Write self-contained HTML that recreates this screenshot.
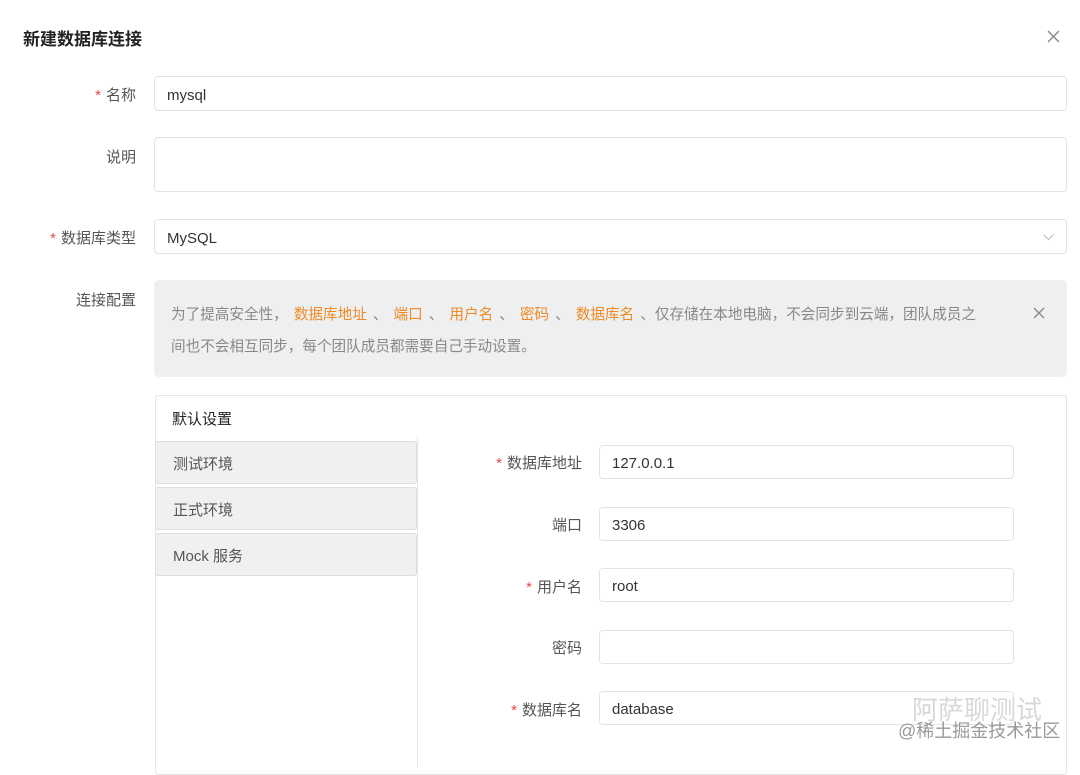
<!DOCTYPE html><html><head><meta charset="utf-8"><style>
*{box-sizing:border-box;margin:0;padding:0}
body{width:1080px;height:757px;background:#fff;font-family:"Liberation Sans","Noto Sans CJK SC",sans-serif;color:#333;position:relative;overflow:hidden;font-size:15px}
.a{position:absolute}
.lbl{position:absolute;text-align:right;font-size:15px;color:#555}
.req{color:#e5484d;margin-right:5px}
.inp{position:absolute;border:1px solid #e3e3e3;border-radius:4px;background:#fff;font-size:15px;color:#333;padding-left:12px;padding-top:3px;display:flex;align-items:center}
.tab{position:absolute;left:155px;width:262px;height:43px;background:#eff0f2;border:1px solid #dedede;border-radius:3px;font-size:15px;color:#555;padding-left:17px;padding-top:2px;display:flex;align-items:center}
.or{color:#f08a24;margin:0 2px}
</style></head><body>
<div class="a" style="left:23px;top:25px;font-size:17px;font-weight:bold;color:#222">新建数据库连接</div>
<svg class="a" style="left:1047px;top:30px" width="13" height="13"><path d="M1 1L12 12M12 1L1 12" stroke="#888" stroke-width="1.4"/></svg>

<div class="lbl" style="right:944px;top:84px"><span class="req">*</span>名称</div>
<div class="inp" style="left:154px;top:76px;width:913px;height:35px">mysql</div>
<div class="lbl" style="right:944px;top:146px">说明</div>
<div class="inp" style="left:154px;top:137px;width:913px;height:55px"></div>
<div class="lbl" style="right:944px;top:227px"><span class="req">*</span>数据库类型</div>
<div class="inp" style="left:154px;top:219px;width:913px;height:35px">MySQL<svg style="position:absolute;right:12px;top:14px" width="11" height="7"><path d="M0.5 0.5L5.5 5.5L10.5 0.5" fill="none" stroke="#bbb"/></svg></div>
<div class="lbl" style="right:944px;top:289px">连接配置</div>
<div class="a" style="left:154px;top:280px;width:913px;height:97px;background:#eeeff1;border-radius:5px;padding:19px 80px 0 17px;font-size:14.6px;line-height:32px;color:#888">为了提高安全性， <span class="or">数据库地址</span> 、 <span class="or">端口</span> 、 <span class="or">用户名</span> 、 <span class="or">密码</span> 、 <span class="or">数据库名</span> 、仅存储在本地电脑，不会同步到云端，团队成员之间也不会相互同步，每个团队成员都需要自己手动设置。<svg style="position:absolute;right:22px;top:27px" width="12" height="12"><path d="M1 1L11 11M11 1L1 11" stroke="#888" stroke-width="1.4"/></svg></div>

<div class="a" style="left:155px;top:395px;width:912px;height:380px;border:1px solid #e5e5e5;border-radius:3px"></div>
<div class="a" style="left:417px;top:437px;width:1px;height:330px;background:#e5e5e5"></div>
<div class="a" style="left:172px;top:408px;font-size:15px;color:#222">默认设置</div>
<div class="tab" style="top:441px">测试环境</div>
<div class="tab" style="top:487px">正式环境</div>
<div class="tab" style="top:533px">Mock 服务</div>

<div class="lbl" style="right:498px;top:452px"><span class="req">*</span>数据库地址</div>
<div class="inp" style="left:599px;top:445px;width:415px;height:34px">127.0.0.1</div>
<div class="lbl" style="right:498px;top:514px">端口</div>
<div class="inp" style="left:599px;top:507px;width:415px;height:34px">3306</div>
<div class="lbl" style="right:498px;top:576px"><span class="req">*</span>用户名</div>
<div class="inp" style="left:599px;top:568px;width:415px;height:34px">root</div>
<div class="lbl" style="right:498px;top:637px">密码</div>
<div class="inp" style="left:599px;top:630px;width:415px;height:34px"></div>
<div class="lbl" style="right:498px;top:699px"><span class="req">*</span>数据库名</div>
<div class="inp" style="left:599px;top:691px;width:415px;height:34px">database</div>
<div class="a" style="left:912px;top:690px;font-size:26px;color:#d8d8d8">阿萨聊测试</div>
<div class="a" style="left:898px;top:717px;font-size:18px;color:#999">@稀土掘金技术社区</div>
</body></html>
